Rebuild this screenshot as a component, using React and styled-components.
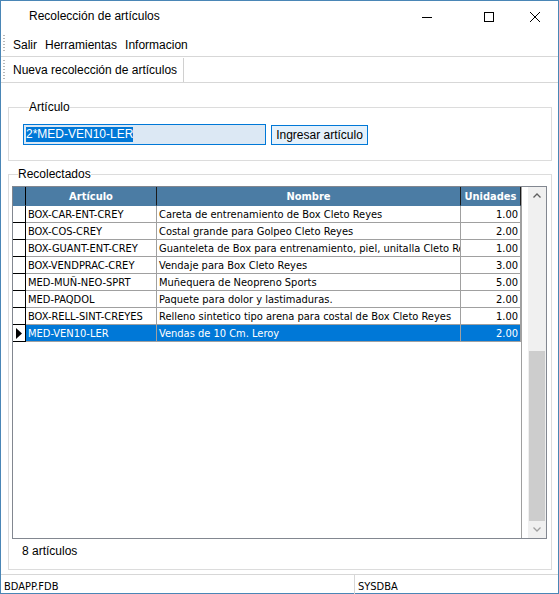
import React from 'react';
import styled, { createGlobalStyle } from 'styled-components';

const GlobalStyle = createGlobalStyle`
    body {
        margin: 0;
        font-family: "Liberation Sans", Arial, sans-serif;
        font-size: 12px;
        color: #000;
    }
`;

// Styled Components
const Window = styled.div`
    width: 559px;
    height: 594px;
    box-sizing: border-box;
    border: 1px solid #4a86b6;
    background: #fff;
    display: flex;
    flex-direction: column;
`;

const TitleBar = styled.div`
    height: 31px;
    flex: none;
    display: flex;
    align-items: center;
    padding-left: 28px;
    font-size: 12px;
`;

const Title = styled.span`
    flex: 1;
    padding-bottom: 2px;
`;

const Controls = styled.div`
    display: flex;
    height: 100%;
`;

const ControlButton = styled.div`
    width: 46px;
    height: 100%;
    display: flex;
    align-items: center;
    justify-content: center;
    margin-left: ${p => p.gap || 0}px;
`;

const Bar = styled.div`
    height: ${p => p.h}px;
    flex: none;
    display: flex;
    align-items: center;
    border-bottom: 1px solid #d7d7d7;
    position: relative;
    padding-left: ${p => p.pl || 6}px;
    padding-top: ${p => p.pt || 0}px;
    box-sizing: border-box;
`;

const Gripper = styled.div`
    position: absolute;
    left: 2px;
    top: 3px;
    bottom: 3px;
    width: 2px;
    background-image: linear-gradient(#b8b8b8 50%, transparent 50%);
    background-size: 2px 3px;
`;

const MenuItem = styled.span`
    padding: 0 4px;
`;

const ToolButton = styled.div`
    height: 100%;
    display: flex;
    align-items: center;
    padding: 0 6px 0 6px;
    border-right: 1px solid #d0d0d0;
`;

const Content = styled.div`
    flex: 1;
    display: flex;
    flex-direction: column;
    padding: 17px 6px 0 7px;
`;

const Group = styled.fieldset`
    margin: 0;
    border: 1px solid #dcdcdc;
    padding: ${p => p.pad};
    min-width: 0;
    ${p => p.grow && 'flex: 1; display: flex; flex-direction: column;'}
    margin-bottom: ${p => p.mb || 0}px;
`;

const Legend = styled.legend`
    padding: 0;
    margin-left: 6px;
    line-height: 14px;
`;

const EntryRow = styled.div`
    display: flex;
    align-items: center;
    gap: 5px;
`;

const TextInput = styled.div`
    width: 243px;
    height: 21px;
    box-sizing: border-box;
    border: 1px solid #0078d7;
    background: #dce8f4;
    display: flex;
    align-items: center;
    padding-left: 2px;
`;

const Selected = styled.span`
    background: #0078d7;
    color: #fff;
    line-height: 15px;
`;

const Button = styled.div`
    width: 97px;
    height: 20px;
    box-sizing: border-box;
    border: 1px solid #0078d7;
    background: #e5f1fb;
    display: flex;
    align-items: center;
    justify-content: center;
`;

const Grid = styled.div`
    height: 353px;
    box-sizing: border-box;
    border: 1px solid #828790;
    display: flex;
    font-family: "DejaVu Sans Condensed", "Liberation Sans", sans-serif;
    font-size: 11px;
`;

const GridBody = styled.div`
    flex: 1;
    background: #fff;
    border-right: 1px solid #a0a0a0;
`;

const Row = styled.div`
    display: grid;
    grid-template-columns: 13px 131px 304px 60px;
    height: ${p => (p.header ? 19 : 17)}px;
    background: ${p => (p.header ? '#4b7ca4' : p.active ? '#0078d7' : '#fff')};
    color: ${p => (p.header || p.active ? '#fff' : '#000')};
    font-weight: ${p => (p.header ? 'bold' : 'normal')};
`;

const Cell = styled.div`
    overflow: hidden;
    white-space: nowrap;
    display: flex;
    align-items: center;
    justify-content: ${p => (p.header ? 'center' : p.right ? 'flex-end' : 'flex-start')};
    padding: 0 2px;
    border-right: 1px solid ${p => (p.header ? '#1a1a1a' : '#a0a0a0')};
    border-bottom: 1px solid ${p => (p.header ? '#4b7ca4' : '#a0a0a0')};
`;

const Indicator = styled.div`
    border-right: 1px solid #000;
    border-bottom: 1px solid ${p => (p.header ? '#4b7ca4' : '#000')};
    background: ${p => (p.header ? '#4b7ca4' : '#fff')};
    display: flex;
    align-items: center;
    justify-content: center;
`;

const Scrollbar = styled.div`
    width: 18px;
    background: #f0f0f0;
    display: flex;
    flex-direction: column;
    margin-left: 6px;
`;

const Arrow = styled.div`
    height: 17px;
    display: flex;
    align-items: center;
    justify-content: center;
`;

const Track = styled.div`
    flex: 1;
    display: flex;
    flex-direction: column;
    justify-content: flex-end;
    padding: 0 1px;
`;

const Thumb = styled.div`
    height: 170px;
    background: #cdcdcd;
`;

const Count = styled.div`
    padding: 5px 0 0 10px;
    height: 25px;
`;

const StatusBar = styled.div`
    height: 21px;
    flex: none;
    margin-top: 4px;
    border-top: 1px solid #d7d7d7;
    display: flex;
`;

const StatusPanel = styled.div`
    width: ${p => p.w}px;
    flex: ${p => (p.w ? 'none' : 1)};
    display: flex;
    align-items: center;
    padding-left: 3px;
    padding-top: 1px;
    border-right: ${p => (p.w ? '1px solid #d7d7d7' : 'none')};
    font-family: "DejaVu Sans Condensed", sans-serif;
    font-size: 11px;
`;

const items = [
    { code: 'BOX-CAR-ENT-CREY', name: 'Careta de entrenamiento de Box Cleto Reyes', qty: '1.00' },
    { code: 'BOX-COS-CREY', name: 'Costal grande para Golpeo Cleto Reyes', qty: '2.00' },
    { code: 'BOX-GUANT-ENT-CREY', name: 'Guanteleta de Box para entrenamiento, piel, unitalla Cleto Reyes', qty: '1.00' },
    { code: 'BOX-VENDPRAC-CREY', name: 'Vendaje para Box Cleto Reyes', qty: '3.00' },
    { code: 'MED-MUÑ-NEO-SPRT', name: 'Muñequera de Neopreno Sports', qty: '5.00' },
    { code: 'MED-PAQDOL', name: 'Paquete para dolor y lastimaduras.', qty: '2.00' },
    { code: 'BOX-RELL-SINT-CREYES', name: 'Relleno sintetico tipo arena para costal de Box Cleto Reyes', qty: '1.00' },
    { code: 'MED-VEN10-LER', name: 'Vendas de 10 Cm. Leroy', qty: '2.00' },
];

const App = () => {
    return (
        <Window>
            <GlobalStyle />
            <TitleBar>
                <Title>Recolección de artículos</Title>
                <Controls>
                    <ControlButton>
                        <svg width="10" height="10"><path d="M0 5.5h10" stroke="#000" /></svg>
                    </ControlButton>
                    <ControlButton gap={16}>
                        <svg width="10" height="10"><rect x="0.5" y="0.5" width="9" height="9" fill="none" stroke="#000" /></svg>
                    </ControlButton>
                    <ControlButton>
                        <svg width="10" height="10"><path d="M0 0L10 10M10 0L0 10" stroke="#000" /></svg>
                    </ControlButton>
                </Controls>
            </TitleBar>
            <Bar h={25} pl={8} pt={2}>
                <Gripper />
                <MenuItem>Salir</MenuItem>
                <MenuItem>Herramientas</MenuItem>
                <MenuItem>Informacion</MenuItem>
            </Bar>
            <Bar h={26} pt={1}>
                <Gripper />
                <ToolButton>Nueva recolección de artículos</ToolButton>
            </Bar>
            <Content>
                <Group pad="10px 14px 15px 14px" mb={6}>
                    <Legend>Artículo</Legend>
                    <EntryRow>
                        <TextInput><Selected>2*MED-VEN10-LER</Selected></TextInput>
                        <Button>Ingresar artículo</Button>
                    </EntryRow>
                </Group>
                <Group pad="5px 4px 0 3px" grow>
                    <Legend>Recolectados</Legend>
                    <Grid>
                        <GridBody>
                            <Row header>
                                <Indicator header />
                                <Cell header>Artículo</Cell>
                                <Cell header>Nombre</Cell>
                                <Cell header>Unidades</Cell>
                            </Row>
                            {items.map((item, i) => {
                                const active = i === items.length - 1;
                                return (
                                    <Row key={item.code} active={active}>
                                        <Indicator>
                                            {active && (
                                                <svg width="6" height="11"><path d="M0 0L6 5.5L0 11Z" fill="#000" /></svg>
                                            )}
                                        </Indicator>
                                        <Cell>{item.code}</Cell>
                                        <Cell>{item.name}</Cell>
                                        <Cell right>{item.qty}</Cell>
                                    </Row>
                                );
                            })}
                        </GridBody>
                        <Scrollbar>
                            <Arrow>
                                <svg width="8" height="5"><path d="M0.5 4.5L4 1L7.5 4.5" fill="none" stroke="#606060" strokeWidth="1.3" /></svg>
                            </Arrow>
                            <Track><Thumb /></Track>
                            <Arrow>
                                <svg width="8" height="5"><path d="M0.5 0.5L4 4L7.5 0.5" fill="none" stroke="#a0a0a0" strokeWidth="1.3" /></svg>
                            </Arrow>
                        </Scrollbar>
                    </Grid>
                    <Count>8 artículos</Count>
                </Group>
            </Content>
            <StatusBar>
                <StatusPanel w={350}>BDAPP.FDB</StatusPanel>
                <StatusPanel>SYSDBA</StatusPanel>
            </StatusBar>
        </Window>
    );
};

export default App;
